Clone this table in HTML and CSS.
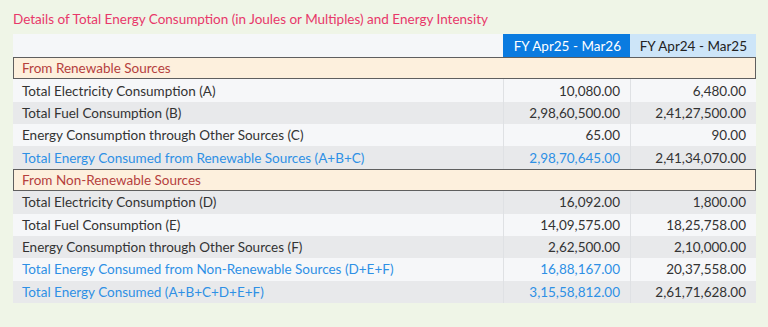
FILE: index.html
```html
<!DOCTYPE html>
<html>
<head>
<meta charset="utf-8">
<link rel="stylesheet" href="styles.css">
</head>
<body>
<div class="panel">
  <h2 class="title">Details of Total Energy Consumption (in Joules or Multiples) and Energy Intensity</h2>
  <div class="grid">
    <div class="row head"><div class="cell"></div><div class="cell h-cur">FY Apr25 - Mar26</div><div class="cell h-prev">FY Apr24 - Mar25</div></div>
    <div class="row section"><div class="cell">From Renewable Sources</div></div>
    <div class="row"><div class="cell">Total Electricity Consumption (A)</div><div class="cell num">10,080.00</div><div class="cell num">6,480.00</div></div>
    <div class="row alt"><div class="cell">Total Fuel Consumption (B)</div><div class="cell num">2,98,60,500.00</div><div class="cell num">2,41,27,500.00</div></div>
    <div class="row"><div class="cell">Energy Consumption through Other Sources (C)</div><div class="cell num">65.00</div><div class="cell num">90.00</div></div>
    <div class="row alt total"><div class="cell">Total Energy Consumed from Renewable Sources (A+B+C)</div><div class="cell num">2,98,70,645.00</div><div class="cell num">2,41,34,070.00</div></div>
    <div class="row section"><div class="cell">From Non-Renewable Sources</div></div>
    <div class="row alt"><div class="cell">Total Electricity Consumption (D)</div><div class="cell num">16,092.00</div><div class="cell num">1,800.00</div></div>
    <div class="row"><div class="cell">Total Fuel Consumption (E)</div><div class="cell num">14,09,575.00</div><div class="cell num">18,25,758.00</div></div>
    <div class="row alt"><div class="cell">Energy Consumption through Other Sources (F)</div><div class="cell num">2,62,500.00</div><div class="cell num">2,10,000.00</div></div>
    <div class="row total"><div class="cell">Total Energy Consumed from Non-Renewable Sources (D+E+F)</div><div class="cell num">16,88,167.00</div><div class="cell num">20,37,558.00</div></div>
    <div class="row alt total"><div class="cell">Total Energy Consumed (A+B+C+D+E+F)</div><div class="cell num">3,15,58,812.00</div><div class="cell num">2,61,71,628.00</div></div>
  </div>
</div>
</body>
</html>
```
FILE: styles.css
```css
html, body {
  margin: 0;
  padding: 0;
  background: #eff5e7;
}
body {
  font-family: "Lato", "Noto Sans", sans-serif;
  font-size: 13.5px;
  color: #333;
}
.panel {
  padding: 11px 12px 0 13px;
}
.title {
  margin: 0 0 6px 0;
  font-size: 13.5px;
  font-weight: 400;
  line-height: 17px;
  color: #e8386a;
}
.grid {
  width: 743px;
  display: flex;
  flex-direction: column;
}
.row {
  display: grid;
  grid-template-columns: 490px 127px 126px;
  height: 22.36px;
  background: #f6f7f9;
}
.row.alt { background: #e8e9eb; }
.row.head {
  height: 23px;
  background: #f5f7f9;
  color: #222;
}
.cell {
  display: flex;
  align-items: center;
  padding: 0 9px;
  white-space: nowrap;
  border-left: 1px solid #dfe1e4;
}
.cell:first-child { border-left: none; }
.head .cell { justify-content: flex-end; border-left: none; }
.head .h-cur { background: #0a7be0; color: #fff; }
.head .h-prev { background: #cde5f8; color: #222; }
.num { justify-content: flex-end; padding-right: 10px; }
.row.section {
  display: block;
  background: #fdf0dd;
  color: #b5403d;
  border: 1px solid #5f5f5f;
  box-sizing: border-box;
}
.section .cell { height: 100%; padding-left: 8px; }
.total .cell:first-child,
.total .cell:nth-child(2) {
  color: #2e90e5;
}
```
